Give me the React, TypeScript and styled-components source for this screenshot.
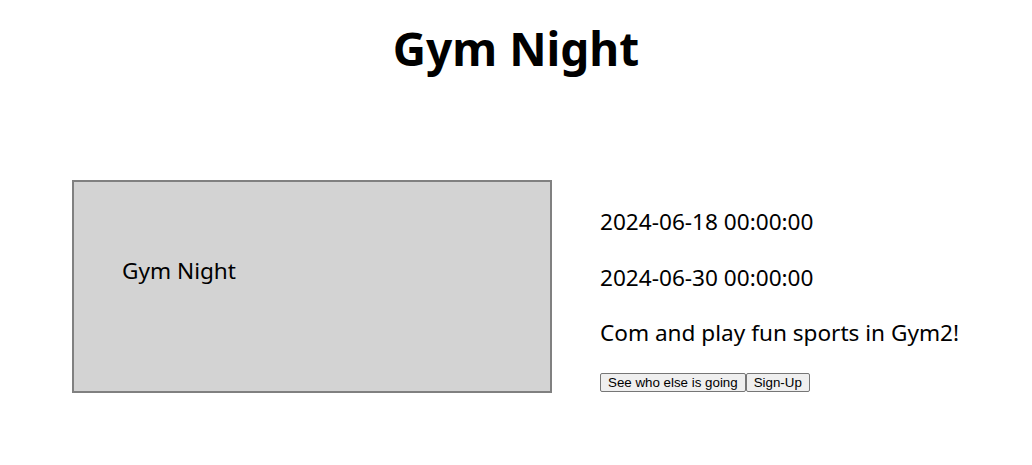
import React from "react";
import styled, { createGlobalStyle } from "styled-components";

const GlobalStyle = createGlobalStyle`
  body {
    margin: 0;
    background: #ffffff;
    font-family: "Noto Sans", "Open Sans", sans-serif;
    color: #000000;
  }
`;

const Page = styled.div`
  width: 1032px;
  height: 465px;
  overflow: hidden;
`;

const Title = styled.h1`
  margin: 0;
  padding-top: 18px;
  text-align: center;
  font-size: 46px;
  font-weight: 700;
  line-height: 60px;
`;

const Event = styled.section`
  display: flex;
  align-items: flex-start;
  gap: 48px;
  margin-top: 102px;
  padding-left: 72px;
`;

const Poster = styled.div`
  box-sizing: border-box;
  width: 480px;
  height: 213px;
  background: #d3d3d3;
  border: 2px solid #808080;
  padding: 74px 0 0 48px;
  font-size: 22.6px;
  line-height: 30px;
`;

const Details = styled.div`
  display: flex;
  flex-direction: column;
  align-items: flex-start;
  padding-top: 2px;
`;

const Line = styled.p`
  margin: 24px 0 0;
  font-size: 22.6px;
  line-height: 31.5px;
`;

const Buttons = styled.div`
  display: flex;
  margin-top: 24px;
`;

const Button = styled.button`
  font-family: "Liberation Sans", Arial, sans-serif;
  font-size: 13.33px;
  padding: 1px 7px;
  background: #efefef;
  border: 1px solid #767676;
  border-radius: 2px;
  color: #000000;
`;

export default function App() {
  return (
    <Page>
      <GlobalStyle />
      <Title>Gym Night</Title>
      <Event>
        <Poster>Gym Night</Poster>
        <Details>
          <Line>2024-06-18 00:00:00</Line>
          <Line>2024-06-30 00:00:00</Line>
          <Line>Com and play fun sports in Gym2!</Line>
          <Buttons>
            <Button>See who else is going</Button>
            <Button>Sign-Up</Button>
          </Buttons>
        </Details>
      </Event>
    </Page>
  );
}
